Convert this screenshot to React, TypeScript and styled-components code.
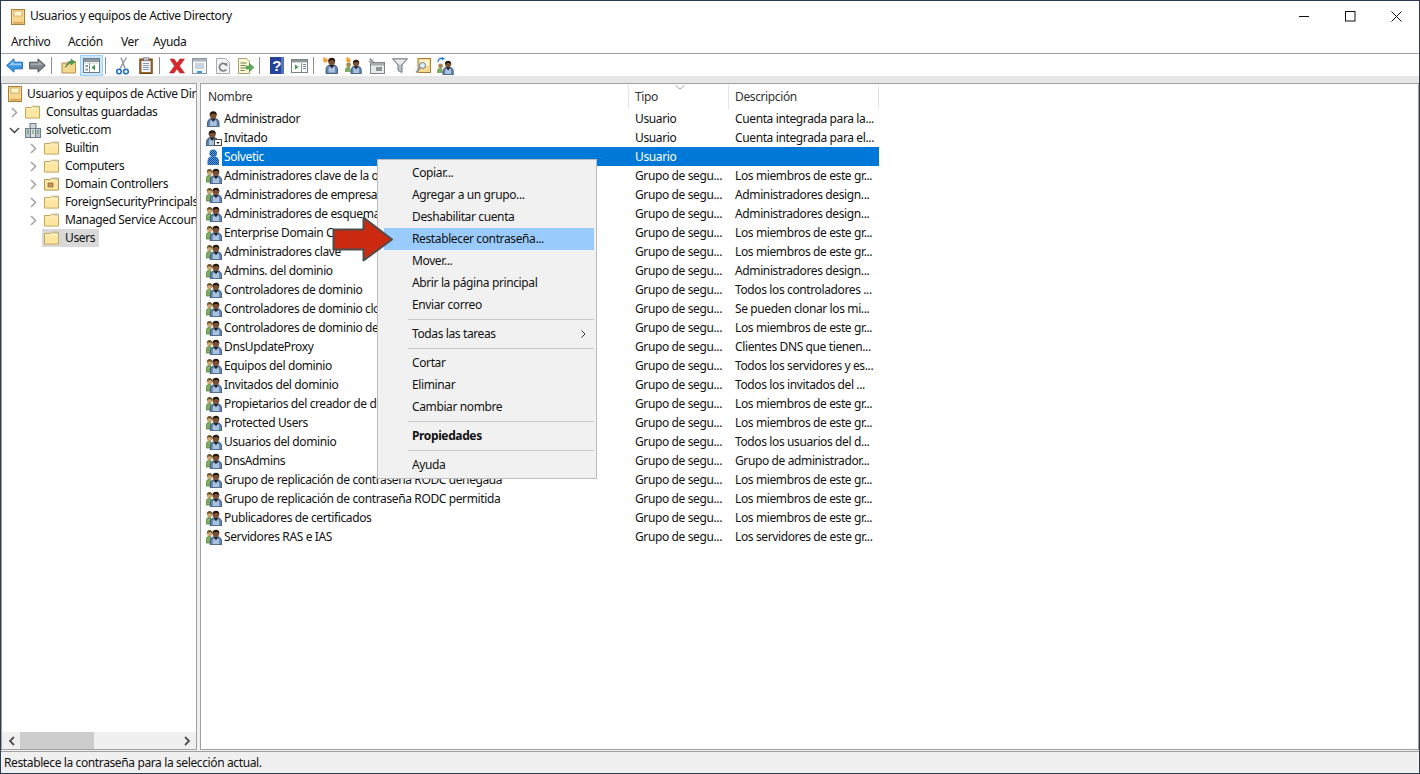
import React from "react";
import styled, { createGlobalStyle } from "styled-components";

const Global = createGlobalStyle`
  html, body { margin: 0; padding: 0; background: #f0f0f0; }
  body { width: 1420px; height: 774px; overflow: hidden; font-family: "Noto Sans", "Open Sans", Arial, sans-serif; font-size: 12px; letter-spacing: -0.38px; color: #000; }
  * { box-sizing: border-box; }
  svg { display: block; flex: none; }
`;

const Window = styled.div`
  position: relative; width: 1420px; height: 774px; border: 1px solid #2b3a55;
  display: flex; flex-direction: column; background: #f0f0f0; overflow: hidden;
`;
const TitleBar = styled.div`
  height: 31px; flex: none; background: #fff; display: flex; align-items: center; padding-left: 10px;
`;
const TitleText = styled.span`
  margin-left: 5px; flex: 1; line-height: 28px; height: 30px; color: #111;
`;
const WinButton = styled.div`
  width: 46px; height: 31px; display: flex; align-items: center; justify-content: center; padding-bottom: 1px;
`;
const MenuBar = styled.div`
  height: 22px; flex: none; background: #fff; border-bottom: 1px solid #a0a0a0; display: flex; align-items: center; padding-left: 3px; padding-bottom: 3px;
`;
const MenuBarItem = styled.div<{ $w: number }>`
  width: ${(p) => p.$w}px; padding-left: 7px; color: #111;
`;
const Toolbar = styled.div`
  height: 22px; flex: none; background: #fff; display: flex; padding: 1px 0 0 2px;
`;
const ToolButton = styled.div<{ $active?: boolean }>`
  width: 23px; height: 21px; display: flex; align-items: center; justify-content: center;
  ${(p) => p.$active && "background: #cce8ff; border: 1px solid #99d1ff;"}
`;
const ToolSep = styled.div`
  width: 8px; height: 21px; padding-left: 2px; padding-top: 2px;
  &::before { content: ""; display: block; width: 1px; height: 17px; background: #8f8f8f; }
`;
const Strip = styled.div`
  height: 7px; flex: none; background: #e6e6e6;
`;
const Main = styled.div`
  flex: 1; min-height: 0; display: flex; gap: 3px; margin-bottom: 1px;
`;
const TreePane = styled.div`
  width: 196px; flex: none; background: #fff; border: 1px solid #a0a0a0; display: flex; flex-direction: column;
`;
const TreeBody = styled.div`
  flex: 1; min-height: 0; overflow: hidden; padding-top: 1px;
`;
const TreeRow = styled.div<{ $depth: number }>`
  height: 18px; display: flex; align-items: center; white-space: nowrap;
  padding-left: ${(p) => (p.$depth === 0 ? 6 : 4 + p.$depth * 19)}px;
`;
const Expander = styled.div`
  width: 0; height: 16px; flex: none; display: flex; align-items: center; justify-content: center; position: relative; left: -11px;
`;
const TreeLabel = styled.span<{ $selected?: boolean }>`
  height: 18px; line-height: 18px; padding: 0 4px; flex: none;
  color: #111;
  ${(p) => p.$selected && "background: #d9d9d9;"}
`;
const TreeIconSlot = styled.div<{ $selected?: boolean; $depth: number }>`
  width: ${(p) => (p.$depth === 0 ? 17 : 19)}px; height: 18px; flex: none; display: flex; align-items: center;
  margin-left: -2px; padding-left: 2px;
  ${(p) => p.$selected && "background: #d9d9d9;"}
`;
const HScroll = styled.div`
  height: 17px; flex: none; background: #f0f0f0; display: flex; align-items: center;
`;
const ScrollArrow = styled.div`
  width: 18px; height: 17px; flex: none; display: flex; align-items: center; justify-content: center;
`;
const ScrollTrack = styled.div`
  flex: 1; height: 17px;
`;
const ScrollThumb = styled.div`
  width: 74px; height: 17px; background: #cdcdcd;
`;
const ListPane = styled.div`
  flex: 1; min-width: 0; background: #fff; border: 1px solid #a0a0a0; overflow: hidden;
`;
const ListHeader = styled.div`
  position: relative; height: 25px; display: flex; width: 678px;
`;
const HeaderCell = styled.div<{ $w: number; $pad: number }>`
  width: ${(p) => p.$w}px; padding-left: ${(p) => p.$pad}px; border-right: 1px solid #e5e5e5; margin-top: 1px;
  line-height: 24px; color: #333; height: 24px;
`;
const SortCaret = styled.div`
  position: absolute; left: 474px; top: 1px;
`;
const Row = styled.div`
  height: 19px; width: 678px; display: flex; align-items: center;
`;
const RowIconSlot = styled.div`
  width: 21px; height: 19px; flex: none; padding-left: 5px; display: flex; align-items: center;
`;
const RowCells = styled.div<{ $selected?: boolean }>`
  flex: 1; height: 19px; display: flex; line-height: 19px; white-space: nowrap;
  color: ${(p) => (p.$selected ? "#fff" : "#111")};
  background: ${(p) => (p.$selected ? "#0078d7" : "transparent")};
`;
const NameCell = styled.div`
  width: 407px; padding-left: 2px; overflow: hidden;
`;
const TypeCell = styled.div`
  width: 100px; padding-left: 6px; overflow: hidden;
`;
const DescCell = styled.div`
  width: 150px; padding-left: 6px; overflow: hidden;
`;
const StatusBar = styled.div`
  height: 22px; flex: none; border-top: 1px solid #a0a0a0; padding-left: 3px; line-height: 21px; color: #111;
`;
const ContextMenu = styled.div`
  position: absolute; left: 376px; top: 158px; width: 220px; height: 320px;
  background: #f1f1f1; border: 1px solid #bdbdbd; padding: 2px 2px 2px 6px;
`;
const MenuItem = styled.div<{ $hot?: boolean; $bold?: boolean }>`
  height: 22px; line-height: 22px; padding-left: 28px; position: relative; color: #111;
  ${(p) => p.$hot && "background: #99cbfd;"}
  ${(p) => p.$bold && "font-weight: 700;"}
`;
const MenuSep = styled.div`
  height: 7px; padding: 3px 0 3px 24px;
  &::before { content: ""; display: block; height: 1px; background: #c8c8c8; }
`;
const SubArrow = styled.div`
  position: absolute; right: 8px; top: 7px;
`;
const RedArrow = styled.div`
  position: absolute; left: 330px; top: 214px;
`;

/* ---------- drawings ---------- */
const Person = ({ x = 0, y = 0, body = "#5f83ad", light = "#a9c2dd" }: { x?: number; y?: number; body?: string; light?: string }) => (
  <g transform={`translate(${x} ${y})`}>
    <path d="M.5 16v-4c0-2.800 2-4.200 3.500-4.500h4.500c2 .4 3.500 1.900 3.500 4.500v4z" fill={body} stroke="#33496a" strokeWidth=".8" />
    <path d="M3 15v-3.500c0-1.200.8-2 1.800-2.200h3c1.200.3 1.800 1.100 1.800 2.200V15z" fill={light} />
    <path d="M3.800 7.500h5L6.300 11z" fill="#20202a" />
    <circle cx="6.200" cy="4.200" r="3.400" fill="#7a5232" />
    <path d="M2.700 4.500C2.300 1.700 4.200.3 6.400.3c2.200 0 3.500 1.500 3.300 3.900-.9-1.100-2.200-1.700-3.600-1.500-1.100.2-2.800.8-3.400 1.800z" fill="#241910" />
  </g>
);
const UserIcon = () => (
  <svg width="15" height="16" viewBox="0 0 15 16"><Person x={1} y={0} /></svg>
);
const GuestIcon = () => (
  <svg width="16" height="16" viewBox="0 0 16 16">
    <Person x={0} y={0} />
    <rect x="8.500" y="9.500" width="7" height="6" fill="#fff" stroke="#4a4a4a" />
    <path d="M10.200 12h3.600l-1.800 2z" fill="#222" />
  </svg>
);
const SelectedUserIcon = () => (
  <svg width="15" height="16" viewBox="0 0 15 16">
    <defs>
      <pattern id="dither" width="2" height="2" patternUnits="userSpaceOnUse">
        <rect width="2" height="2" fill="#0f4f96" />
        <rect width="1" height="1" fill="#5a9be0" />
        <rect x="1" y="1" width="1" height="1" fill="#5a9be0" />
      </pattern>
    </defs>
    <path d="M1.500 16v-4c0-2.800 2-4.200 3.500-4.500h4.500c2 .4 3.500 1.900 3.500 4.500v4z" fill="url(#dither)" />
    <circle cx="7.200" cy="4.200" r="3.800" fill="url(#dither)" />
  </svg>
);
const GroupIcon = () => (
  <svg width="16" height="16" viewBox="0 0 16 16">
    <path d="M0 14v-3c0-2.200 1.200-3.200 2.400-3.400h2.400L6 14z" fill="#7fae62" stroke="#4c7a3a" strokeWidth=".7" />
    <circle cx="3.600" cy="4.400" r="2.700" fill="#c9a672" />
    <path d="M.9 4.200C.9 2 2 1 3.600 1s2.700 1.100 2.600 3c-1.100-.9-3.900-.9-5.300.2z" fill="#6d5020" />
    <g transform="translate(3.800 .4) scale(.98)"><Person /></g>
  </svg>
);
const Folder = () => (
  <svg width="15" height="14" viewBox="0 0 15 14">
    <path d="M.5 2.500v10.600h14V1.200H7.400L6.400 2.500z" fill="#fbe6a2" stroke="#c9a55c" />
    <path d="M1.500 4h12" stroke="#fff6d0" />
    <rect x="10.500" y="1.500" width="3" height="1" fill="#8fc6e8" />
  </svg>
);
const OUFolder = () => (
  <svg width="15" height="14" viewBox="0 0 15 14">
    <path d="M.5 2.500v10.600h14V1.200H7.400L6.400 2.500z" fill="#fbe6a2" stroke="#b8944f" />
    <rect x="4" y="6" width="5" height="4" fill="#c89650" stroke="#7a5a2a" strokeWidth=".6" />
    <rect x="10.500" y="1.500" width="3" height="1" fill="#8fc6e8" />
  </svg>
);
const RootIcon = () => (
  <svg width="14" height="16" viewBox="0 0 14 16">
    <rect x=".5" y=".5" width="13" height="15" fill="#f7d88e" stroke="#a98040" />
    <rect x="2" y="12.800" width="10.500" height="2" fill="#d9a95a" />
    <rect x="3" y="2" width="8" height="5" fill="#fff4cc" stroke="#b89350" strokeWidth=".6" />
  </svg>
);
const DomainIcon = () => (
  <svg width="16" height="15" viewBox="0 0 16 15">
    <rect x="5" y="0.500" width="6" height="5" fill="#cfd6dc" stroke="#6f7d88" />
    <rect x=".5" y="5.500" width="5" height="9" fill="#b9c6cf" stroke="#6f7d88" />
    <rect x="10.500" y="5.500" width="5" height="9" fill="#b9c6cf" stroke="#6f7d88" />
    <rect x="5.500" y="5.500" width="5" height="9" fill="#dfe5e9" stroke="#6f7d88" />
    <path d="M2 8h2M2 10h2M12 8h2M12 10h2M7 8h2M7 10h2" stroke="#5e8f4c" />
  </svg>
);
const ChevronRight = () => (
  <svg width="7" height="11" viewBox="0 0 7 11"><path d="M1 1l4.500 4.500L1 10" fill="none" stroke="#a6a6a6" strokeWidth="1.600" /></svg>
);
const ChevronDown = () => (
  <svg width="11" height="7" viewBox="0 0 11 7"><path d="M1 1l4.500 4.500L10 1" fill="none" stroke="#404040" strokeWidth="1.400" /></svg>
);
const Back = () => (
  <svg width="17" height="15" viewBox="0 0 17 15"><path d="M.7 7.500L8 .8v3.400h8.400v6.600H8v3.400z" fill="#3a97e4" stroke="#1e6bb0" /><path d="M3 7.200L7.500 3v2.400h8v1.800z" fill="#9ad0f7" /></svg>
);
const Forward = () => (
  <svg width="17" height="15" viewBox="0 0 17 15"><path d="M16.300 7.500L9 .8v3.400H.6v6.600H9v3.400z" fill="#7b8389" stroke="#4f565b" /><path d="M1.500 5.200h8V3l4.500 4.200H1.500z" fill="#a4abb0" /></svg>
);
const UpFolder = () => (
  <svg width="16" height="16" viewBox="0 0 16 16">
    <path d="M1 5v10h13.500V3.500H7.500L6.500 5z" fill="#f5d68f" stroke="#b3914d" />
    <path d="M4.500 9.500C5 6 7 4 10 3.400V1l4 3-4 3V5C8 5.500 6.500 7 4.500 9.500z" fill="#4c9a58" stroke="#2e7a3d" strokeWidth=".5" />
  </svg>
);
const ShowHide = () => (
  <svg width="17" height="15" viewBox="0 0 17 15">
    <rect x=".5" y=".5" width="16" height="14" fill="#fff" stroke="#6e7a80" />
    <rect x="1" y="1" width="15" height="3" fill="#8d989e" />
    <path d="M1 5h14.500" stroke="#c9d0d4" />
    <path d="M6.500 5v9" stroke="#8d989e" />
    <path d="M2.500 7h2.500v2H2.500zM2.500 10.500h2.500v2H2.500z" fill="#8d989e" />
    <path d="M12 6.500v6L8.500 9.500z" fill="#3f9a4a" />
  </svg>
);
const Cut = () => (
  <svg width="13" height="18" viewBox="0 0 13 18">
    <path d="M10.500.5L4 11.500M5 .5l4 11" stroke="#8a97a3" strokeWidth="1.400" fill="none" />
    <circle cx="3" cy="14.500" r="2.300" fill="none" stroke="#1f6fc4" strokeWidth="1.600" />
    <circle cx="10" cy="14.500" r="2.300" fill="none" stroke="#1f6fc4" strokeWidth="1.600" />
  </svg>
);
const Paste = () => (
  <svg width="14" height="17" viewBox="0 0 14 17">
    <rect x=".8" y="2" width="12.400" height="14.500" fill="#9c6a32" stroke="#6e4618" />
    <rect x="2.500" y="4" width="9" height="11" fill="#f3f6fa" />
    <path d="M4 6.500h6M4 8.500h6M4 10.500h6M4 12.500h6" stroke="#7f99b8" />
    <rect x="4.500" y=".8" width="5" height="3" fill="#c4c9cf" stroke="#5c5c5c" strokeWidth=".6" />
  </svg>
);
const Del = () => (
  <svg width="18" height="16" viewBox="0 0 18 16"><path d="M2 1h4l3 4 3-4h4.500L11.500 8l5 7H12L9 11l-3 4H1.500l5-7z" fill="#d7282a" stroke="#a51a1c" strokeWidth=".5" /></svg>
);
const Props = () => (
  <svg width="15" height="16" viewBox="0 0 15 16">
    <rect x=".5" y=".5" width="14" height="15" fill="#f3f5f7" stroke="#8c979f" />
    <rect x="1" y="1" width="13" height="2.500" fill="#aab4bb" />
    <path d="M3 6h9M3 8h9M3 10h9" stroke="#9fb3c6" />
    <rect x="5" y="13" width="5" height="2" fill="#3f97de" />
  </svg>
);
const Refresh = () => (
  <svg width="14" height="16" viewBox="0 0 14 16">
    <path d="M.5.5h9l4 4v11H.5z" fill="#f3f4f5" stroke="#a8adb1" />
    <path d="M10.200 11.500A3.800 3.800 0 1 1 10 6.600" fill="none" stroke="#7e858a" strokeWidth="1.800" />
    <path d="M8 6.800l3.400 1.600-.2-4z" fill="#7e858a" />
  </svg>
);
const ExportIcon = () => (
  <svg width="16" height="16" viewBox="0 0 16 16">
    <path d="M.5.5h8l3 3v12H.5z" fill="#fdf6cf" stroke="#a7a27a" />
    <path d="M2.500 5h6M2.500 7.500h5M2.500 10h5M2.500 12.500h4" stroke="#6b7f5c" />
    <path d="M8 8h3.500V5.500L16 9.500 11.500 13.500V11H8z" fill="#58ad55" stroke="#358535" strokeWidth=".5" />
  </svg>
);
const Help = () => (
  <svg width="14" height="17" viewBox="0 0 14 17">
    <rect width="14" height="17" fill="#26439b" />
    <rect x="11" width="3" height="17" fill="#4f74c8" />
    <text x="6.600" y="14" fontSize="15" fontWeight="700" fontFamily="Liberation Sans, sans-serif" fill="#fff" textAnchor="middle">?</text>
  </svg>
);
const Mmc = () => (
  <svg width="17" height="14" viewBox="0 0 17 14">
    <rect x=".5" y=".5" width="16" height="13" fill="#fff" stroke="#76838a" />
    <rect x="1" y="1" width="15" height="2.400" fill="#8d989e" />
    <path d="M10.500 4v9" stroke="#8d989e" />
    <path d="M12 5.500h3M12 7.500h3M12 9.500h3" stroke="#7a8a94" />
    <path d="M4 5.500v5l3.600-2.500z" fill="#3f9a4a" />
  </svg>
);
const Spark = ({ x = 0, y = 0 }: { x?: number; y?: number }) => (
  <path transform={`translate(${x} ${y})`} d="M3 0l.8 1.800L5.600 1l-.8 1.800L6.600 3.600l-1.800.6.6 1.800-1.900-.9L2 6l-.2-1.900L0 3.600l1.800-.8L1 1z" fill="#f0a030" />
);
const NewUser = () => (
  <svg width="17" height="17" viewBox="0 0 17 17"><g transform="translate(3.500 .5)"><Person /></g><Spark x={0} y={0} /></svg>
);
const NewGroup = () => (
  <svg width="17" height="17" viewBox="0 0 17 17">
    <path d="M0 15v-2c0-2 1-3 2.400-3h2.400L6 15z" fill="#7fae62" />
    <circle cx="3.600" cy="7.800" r="2.400" fill="#a88754" />
    <g transform="translate(5.500 2.500) scale(.9)"><Person /></g>
    <Spark x={0} y={0} />
  </svg>
);
const NewOU = () => (
  <svg width="17" height="16" viewBox="0 0 17 16">
    <rect x="2.500" y="4.500" width="14" height="11" fill="#e6e8ea" stroke="#7d868c" />
    <rect x="3" y="5" width="13" height="2.500" fill="#a6adb2" />
    <rect x="8" y="9" width="6" height="4" fill="#8d9499" />
    <path d="M3 0l.8 1.800L5.600 1l-.8 1.800 1.800.8-1.800.6.6 1.800-1.900-.9L2 6l-.2-1.900L0 3.600l1.800-.8L1 1z" fill="#9aa0a5" />
  </svg>
);
const Filter = () => (
  <svg width="16" height="15" viewBox="0 0 16 15">
    <path d="M.5.8h15L10 7v7.500L6 12.500V7z" fill="#b9c3ca" stroke="#6f7a81" />
    <path d="M2.500 1.800h11L9 6.500H7z" fill="#e6ebee" />
  </svg>
);
const FindIcon = () => (
  <svg width="16" height="16" viewBox="0 0 16 16">
    <rect x="3" y=".5" width="12.500" height="14" fill="#f7d88e" stroke="#a97c3a" />
    <rect x="5" y="2" width="9" height="6" fill="#fff4cc" />
    <circle cx="7.500" cy="7.500" r="3" fill="#dff0fb" stroke="#67757f" />
    <path d="M5.200 9.800L1 14.500" stroke="#8c8f92" strokeWidth="1.700" />
  </svg>
);
const AddGroup = () => (
  <svg width="17" height="18" viewBox="0 0 17 18">
    <path d="M1 5C1 2.500 3 1 5.500 1.300" fill="none" stroke="#1f78d1" strokeWidth="1.300" />
    <path d="M5 0l3 1.500L5 3.500z" fill="#1f78d1" />
    <path d="M0 16v-2c0-2 1-3 2.400-3h2.400L6 16z" fill="#7fae62" />
    <circle cx="3.600" cy="8.800" r="2.400" fill="#a88754" />
    <g transform="translate(5.500 3.500) scale(.9)"><Person /></g>
  </svg>
);
const CloseGlyph = () => (
  <svg width="11" height="11" viewBox="0 0 11 11"><path d="M.5.5l10 10M10.500.5l-10 10" stroke="#111" /></svg>
);
const MaxGlyph = () => (
  <svg width="11" height="11" viewBox="0 0 11 11"><rect x=".5" y=".5" width="9.500" height="9.500" fill="none" stroke="#111" /></svg>
);
const MinGlyph = () => (
  <svg width="11" height="11" viewBox="0 0 11 11"><path d="M0 5.500h10" stroke="#111" /></svg>
);
const BigArrow = () => (
  <svg width="66" height="50" viewBox="0 0 66 50">
    <path d="M2.500 14.500h30V2.500L61 24.500 32.500 45.500v-11h-30z" fill="#cc2a10" stroke="#4d4d4d" strokeWidth="2" strokeLinejoin="round" />
  </svg>
);

/* ---------- data ---------- */
const G = "Grupo de segu...";
const rows: [string, string, string, string][] = [
  ["user", "Administrador", "Usuario", "Cuenta integrada para la..."],
  ["guest", "Invitado", "Usuario", "Cuenta integrada para el..."],
  ["sel", "Solvetic", "Usuario", ""],
  ["group", "Administradores clave de la organización", G, "Los miembros de este gr..."],
  ["group", "Administradores de empresas", G, "Administradores design..."],
  ["group", "Administradores de esquema", G, "Administradores design..."],
  ["group", "Enterprise Domain Controllers de solo lectura", G, "Los miembros de este gr..."],
  ["group", "Administradores clave", G, "Los miembros de este gr..."],
  ["group", "Admins. del dominio", G, "Administradores design..."],
  ["group", "Controladores de dominio", G, "Todos los controladores ..."],
  ["group", "Controladores de dominio clonables", G, "Se pueden clonar los mi..."],
  ["group", "Controladores de dominio de solo lectura", G, "Los miembros de este gr..."],
  ["group", "DnsUpdateProxy", G, "Clientes DNS que tienen..."],
  ["group", "Equipos del dominio", G, "Todos los servidores y es..."],
  ["group", "Invitados del dominio", G, "Todos los invitados del ..."],
  ["group", "Propietarios del creador de directivas", G, "Los miembros de este gr..."],
  ["group", "Protected Users", G, "Los miembros de este gr..."],
  ["group", "Usuarios del dominio", G, "Todos los usuarios del d..."],
  ["group", "DnsAdmins", G, "Grupo de administrador..."],
  ["group", "Grupo de replicación de contraseña RODC denegada", G, "Los miembros de este gr..."],
  ["group", "Grupo de replicación de contraseña RODC permitida", G, "Los miembros de este gr..."],
  ["group", "Publicadores de certificados", G, "Los miembros de este gr..."],
  ["group", "Servidores RAS e IAS", G, "Los servidores de este gr..."],
];
const rowIcon = (k: string) =>
  k === "user" ? <UserIcon /> : k === "guest" ? <GuestIcon /> : k === "sel" ? <SelectedUserIcon /> : <GroupIcon />;

const tree: { depth: number; label: string; icon: React.ReactNode; exp?: "r" | "d"; selected?: boolean }[] = [
  { depth: 0, label: "Usuarios y equipos de Active Directory", icon: <RootIcon /> },
  { depth: 1, label: "Consultas guardadas", icon: <Folder />, exp: "r" },
  { depth: 1, label: "solvetic.com", icon: <DomainIcon />, exp: "d" },
  { depth: 2, label: "Builtin", icon: <Folder />, exp: "r" },
  { depth: 2, label: "Computers", icon: <Folder />, exp: "r" },
  { depth: 2, label: "Domain Controllers", icon: <OUFolder />, exp: "r" },
  { depth: 2, label: "ForeignSecurityPrincipals", icon: <Folder />, exp: "r" },
  { depth: 2, label: "Managed Service Accounts", icon: <Folder />, exp: "r" },
  { depth: 2, label: "Users", icon: <Folder />, selected: true },
];

type Tool = { icon: React.ReactNode; active?: boolean } | "sep";
const tools: Tool[] = [
  { icon: <Back /> }, { icon: <Forward /> }, "sep",
  { icon: <UpFolder /> }, { icon: <ShowHide />, active: true }, "sep",
  { icon: <Cut /> }, { icon: <Paste /> }, "sep",
  { icon: <Del /> }, { icon: <Props /> }, { icon: <Refresh /> }, { icon: <ExportIcon /> }, "sep",
  { icon: <Help /> }, { icon: <Mmc /> }, "sep",
  { icon: <NewUser /> }, { icon: <NewGroup /> }, { icon: <NewOU /> }, { icon: <Filter /> }, { icon: <FindIcon /> }, { icon: <AddGroup /> },
];

export default function App() {
  return (
    <>
      <Global />
      <Window>
        <TitleBar>
          <RootIcon />
          <TitleText>Usuarios y equipos de Active Directory</TitleText>
          <WinButton><MinGlyph /></WinButton>
          <WinButton><MaxGlyph /></WinButton>
          <WinButton><CloseGlyph /></WinButton>
        </TitleBar>
        <MenuBar>
          <MenuBarItem $w={57}>Archivo</MenuBarItem>
          <MenuBarItem $w={53}>Acción</MenuBarItem>
          <MenuBarItem $w={32}>Ver</MenuBarItem>
          <MenuBarItem $w={60}>Ayuda</MenuBarItem>
        </MenuBar>
        <Toolbar>
          {tools.map((t, i) =>
            t === "sep" ? <ToolSep key={i} /> : <ToolButton key={i} $active={t.active}>{t.icon}</ToolButton>
          )}
        </Toolbar>
        <Strip />
        <Main>
          <TreePane>
            <TreeBody>
              {tree.map((n) => (
                <TreeRow key={n.label} $depth={n.depth}>
                  {n.exp && <Expander>{n.exp === "r" ? <ChevronRight /> : <ChevronDown />}</Expander>}
                  <TreeIconSlot $selected={n.selected} $depth={n.depth}>{n.icon}</TreeIconSlot>
                  <TreeLabel $selected={n.selected}>{n.label}</TreeLabel>
                </TreeRow>
              ))}
            </TreeBody>
            <HScroll>
              <ScrollArrow>
                <svg width="7" height="10" viewBox="0 0 7 10"><path d="M6 1L2 5l4 4" fill="none" stroke="#505050" strokeWidth="1.800" /></svg>
              </ScrollArrow>
              <ScrollTrack><ScrollThumb /></ScrollTrack>
              <ScrollArrow>
                <svg width="7" height="10" viewBox="0 0 7 10"><path d="M1 1l4 4-4 4" fill="none" stroke="#505050" strokeWidth="1.800" /></svg>
              </ScrollArrow>
            </HScroll>
          </TreePane>
          <ListPane>
            <ListHeader>
              <HeaderCell $w={428} $pad={7}>Nombre</HeaderCell>
              <HeaderCell $w={100} $pad={6}>Tipo</HeaderCell>
              <HeaderCell $w={150} $pad={6}>Descripción</HeaderCell>
              <SortCaret>
                <svg width="10" height="5" viewBox="0 0 10 5"><path d="M.5.5L5 4 9.500.5" fill="none" stroke="#a8a8a8" /></svg>
              </SortCaret>
            </ListHeader>
            {rows.map(([k, name, type, desc]) => (
              <Row key={name}>
                <RowIconSlot>{rowIcon(k)}</RowIconSlot>
                <RowCells $selected={k === "sel"}>
                  <NameCell>{name}</NameCell>
                  <TypeCell>{type}</TypeCell>
                  <DescCell>{desc}</DescCell>
                </RowCells>
              </Row>
            ))}
          </ListPane>
        </Main>
        <StatusBar>Restablece la contraseña para la selección actual.</StatusBar>
        <ContextMenu>
          <MenuItem>Copiar...</MenuItem>
          <MenuItem>Agregar a un grupo...</MenuItem>
          <MenuItem>Deshabilitar cuenta</MenuItem>
          <MenuItem $hot>Restablecer contraseña...</MenuItem>
          <MenuItem>Mover...</MenuItem>
          <MenuItem>Abrir la página principal</MenuItem>
          <MenuItem>Enviar correo</MenuItem>
          <MenuSep />
          <MenuItem>
            Todas las tareas
            <SubArrow>
              <svg width="5" height="8" viewBox="0 0 5 8"><path d="M.5.5L4 4 .5 7.500" fill="none" stroke="#333" /></svg>
            </SubArrow>
          </MenuItem>
          <MenuSep />
          <MenuItem>Cortar</MenuItem>
          <MenuItem>Eliminar</MenuItem>
          <MenuItem>Cambiar nombre</MenuItem>
          <MenuSep />
          <MenuItem $bold>Propiedades</MenuItem>
          <MenuSep />
          <MenuItem>Ayuda</MenuItem>
        </ContextMenu>
        <RedArrow><BigArrow /></RedArrow>
      </Window>
    </>
  );
}
